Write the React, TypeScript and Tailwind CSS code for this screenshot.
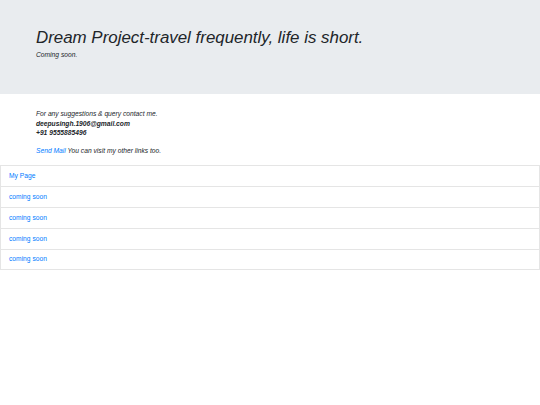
export default function App() {
  const links = ["My Page", "coming soon", "coming soon", "coming soon", "coming soon"];

  return (
    <div className="min-h-screen bg-white text-[#212529] font-['Liberation_Sans',Arial,sans-serif]">
      {/* Jumbotron */}
      <div className="h-[94px] bg-[#e9ecef] pl-[36px] pt-[28px]">
        <h1 className="text-[16.9px] leading-[1.2] italic">
          Dream Project-travel frequently, life is short.
        </h1>
        <p className="mt-[2px] text-[6.7px] leading-[10px] italic">Coming soon.</p>
      </div>

      {/* Contact */}
      <div className="pl-[36px] pt-[15px] text-[6.7px] leading-[9.6px] italic">
        <p>For any suggestions &amp; query contact me.</p>
        <p className="font-bold">deepusingh.1906@gmail.com</p>
        <p className="font-bold">+91 9555885496</p>
        <p className="mt-[8px]">
          <a href="#" className="text-[#007bff]">Send Mail</a> You can visit my other links too.
        </p>
      </div>

      {/* Links */}
      <ul className="mt-[10px] border border-[#e5e5e5] text-[6.7px] leading-[10px]">
        {links.map((l, i) => (
          <li
            key={i}
            className={`px-[8px] py-[4.9px] ${i > 0 ? "border-t border-[#e5e5e5]" : ""}`}
          >
            <a href="#" className="text-[#007bff]">{l}</a>
          </li>
        ))}
      </ul>
    </div>
  );
}
